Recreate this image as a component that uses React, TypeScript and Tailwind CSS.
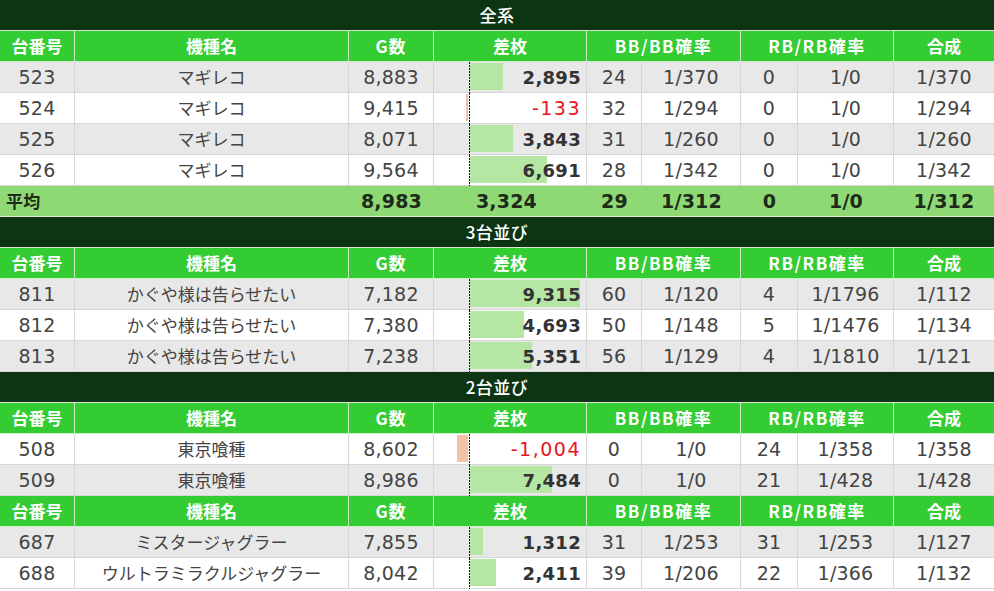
const COLS = "grid grid-cols-[75px_274px_85px_153px_55px_99px_57px_96px_100px]";
const NUM = "font-['DejaVu_Sans','Noto_Sans_CJK_JP',sans-serif] text-[19px] tracking-[0.2px]";
const JP = "font-['Noto_Sans_CJK_JP','DejaVu_Sans',sans-serif] text-[17px]";

type Row = {
  no: string;
  name: string;
  games: string;
  diff: number;
  bar: number;
  bb: string;
  bbRate: string;
  rb: string;
  rbRate: string;
  total: string;
  gray: boolean;
};

const fmt = (n: number) => (n < 0 ? "-" : "") + Math.abs(n).toLocaleString("en-US");

function Title({ text }: { text: string }) {
  return (
    <div className={`h-[31px] bg-[#0d3514] border-b border-[#d9e6d6] flex items-center justify-center text-white ${JP} font-medium tracking-[0.5px]`}>
      {text}
    </div>
  );
}

function Header() {
  const cell = "h-[31px] flex items-center justify-center border-b border-r border-[#c9efc2]";
  return (
    <div className={`${COLS} bg-[#33cc33] text-white font-bold ${JP}`}>
      <div className={cell}>台番号</div>
      <div className={cell}>機種名</div>
      <div className={`${cell} tracking-[1px]`}>G数</div>
      <div className={cell}>差枚</div>
      <div className={`${cell} col-span-2 tracking-[1.5px]`}>BB/BB確率</div>
      <div className={`${cell} col-span-2 tracking-[1.5px]`}>RB/RB確率</div>
      <div className={`${cell} border-r-0`}>合成</div>
    </div>
  );
}

function DataRow({ r }: { r: Row }) {
  const cell = "h-[31px] flex items-center justify-center border-b border-r border-[#d6d6d6] text-[#444]";
  return (
    <div className={`${COLS} ${r.gray ? "bg-[#e8e8e8]" : "bg-white"}`}>
      <div className={`${cell} ${NUM}`}>{r.no}</div>
      <div className={`${cell} ${JP}`}>{r.name}</div>
      <div className={`${cell} ${NUM}`}>{r.games}</div>
      <div className={`${cell} relative justify-end pr-[5px] ${NUM}`}>
        {r.diff >= 0 ? (
          <div className="absolute left-[36px] top-[1px] h-[27px] bg-[#b6e6a4]" style={{ width: r.bar }} />
        ) : (
          <div className="absolute right-[118px] top-[1px] h-[27px] bg-[#f3c1a6]" style={{ width: r.bar }} />
        )}
        <div className="absolute left-[35px] top-0 bottom-[-1px] w-px bg-[repeating-linear-gradient(to_bottom,#111_0_2px,transparent_2px_3px)]" />
        <span
          className={`relative ${
            r.diff < 0 ? "text-[#e8141e] tracking-[1.5px]" : "font-bold text-[#333] tracking-[0.3px] text-[18px]"
          }`}
        >
          {fmt(r.diff)}
        </span>
      </div>
      <div className={`${cell} ${NUM}`}>{r.bb}</div>
      <div className={`${cell} ${NUM}`}>{r.bbRate}</div>
      <div className={`${cell} ${NUM}`}>{r.rb}</div>
      <div className={`${cell} ${NUM}`}>{r.rbRate}</div>
      <div className={`${cell} border-r-0 ${NUM}`}>{r.total}</div>
    </div>
  );
}

const allRows: Row[] = [
  { no: "523", name: "マギレコ", games: "8,883", diff: 2895, bar: 33, bb: "24", bbRate: "1/370", rb: "0", rbRate: "1/0", total: "1/370", gray: true },
  { no: "524", name: "マギレコ", games: "9,415", diff: -133, bar: 2, bb: "32", bbRate: "1/294", rb: "0", rbRate: "1/0", total: "1/294", gray: false },
  { no: "525", name: "マギレコ", games: "8,071", diff: 3843, bar: 43, bb: "31", bbRate: "1/260", rb: "0", rbRate: "1/0", total: "1/260", gray: true },
  { no: "526", name: "マギレコ", games: "9,564", diff: 6691, bar: 77, bb: "28", bbRate: "1/342", rb: "0", rbRate: "1/0", total: "1/342", gray: false },
];

const threeRows: Row[] = [
  { no: "811", name: "かぐや様は告らせたい", games: "7,182", diff: 9315, bar: 110, bb: "60", bbRate: "1/120", rb: "4", rbRate: "1/1796", total: "1/112", gray: true },
  { no: "812", name: "かぐや様は告らせたい", games: "7,380", diff: 4693, bar: 54, bb: "50", bbRate: "1/148", rb: "5", rbRate: "1/1476", total: "1/134", gray: false },
  { no: "813", name: "かぐや様は告らせたい", games: "7,238", diff: 5351, bar: 62, bb: "56", bbRate: "1/129", rb: "4", rbRate: "1/1810", total: "1/121", gray: true },
];

const twoRowsA: Row[] = [
  { no: "508", name: "東京喰種", games: "8,602", diff: -1004, bar: 11, bb: "0", bbRate: "1/0", rb: "24", rbRate: "1/358", total: "1/358", gray: false },
  { no: "509", name: "東京喰種", games: "8,986", diff: 7484, bar: 82, bb: "0", bbRate: "1/0", rb: "21", rbRate: "1/428", total: "1/428", gray: true },
];

const twoRowsB: Row[] = [
  { no: "687", name: "ミスタージャグラー", games: "7,855", diff: 1312, bar: 13, bb: "31", bbRate: "1/253", rb: "31", rbRate: "1/253", total: "1/127", gray: true },
  { no: "688", name: "ウルトラミラクルジャグラー", games: "8,042", diff: 2411, bar: 26, bb: "39", bbRate: "1/206", rb: "22", rbRate: "1/366", total: "1/132", gray: false },
];

export default function App() {
  return (
    <div className="w-[994px] bg-white">
      <Title text="全系" />
      <Header />
      {allRows.map((r) => (
        <DataRow key={r.no} r={r} />
      ))}
      {/* average row */}
      <div className={`${COLS} h-[31px] bg-[#8fd975] border-b border-[#dde8da] font-bold text-[#1d2b1a] ${NUM} text-[18px]`}>
        <div className={`col-span-2 flex items-center pl-[6px] ${JP}`}>平均</div>
        <div className="flex items-center justify-center">8,983</div>
        <div className="flex items-center justify-center pr-[8px]">3,324</div>
        <div className="flex items-center justify-center">29</div>
        <div className="flex items-center justify-center">1/312</div>
        <div className="flex items-center justify-center">0</div>
        <div className="flex items-center justify-center">1/0</div>
        <div className="flex items-center justify-center">1/312</div>
      </div>
      <Title text="3台並び" />
      <Header />
      {threeRows.map((r) => (
        <DataRow key={r.no} r={r} />
      ))}
      <Title text="2台並び" />
      <Header />
      {twoRowsA.map((r) => (
        <DataRow key={r.no} r={r} />
      ))}
      <Header />
      {twoRowsB.map((r) => (
        <DataRow key={r.no} r={r} />
      ))}
    </div>
  );
}
